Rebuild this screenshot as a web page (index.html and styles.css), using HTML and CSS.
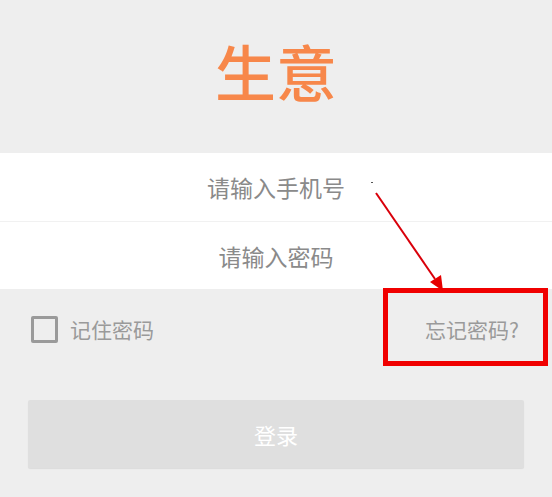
FILE: index.html
```html
<!DOCTYPE html>
<html lang="zh-CN">
  <head>
    <meta charset="UTF-8" />
    <meta name="viewport" content="width=device-width, initial-scale=1.0" />
    <title>生意 登录</title>
    <link rel="stylesheet" href="styles.css">
  </head>
  <body>
    <div class="page">
      <div class="header">
        <h1 class="logo">生意</h1>
      </div>

      <div class="form-panel">
        <div class="form-row">请输入手机号</div>
        <div class="form-row">请输入密码</div>
      </div>

      <div class="options">
        <label class="remember">
          <span class="checkbox"></span>
          <span>记住密码</span>
        </label>
        <a class="forgot">忘记密码?</a>
      </div>

      <div class="login-wrap">
        <button class="login-btn">登录</button>
      </div>

      <!-- 标注 -->
      <div class="mark-box"></div>
      <svg class="mark-arrow" width="552" height="497" viewBox="0 0 552 497">
        <rect x="371" y="182" width="2" height="1" fill="#555" />
        <line x1="376" y1="193" x2="435" y2="279" stroke="#d9000a" stroke-width="2" />
        <polygon points="443,291 430,282 441,275" fill="#e60000" />
      </svg>
    </div>
  </body>
</html>
```

FILE: styles.css
```css
/* 전체 */
body {
  margin: 0;
  background-color: #eeeeee;
  font-family: "Noto Sans CJK SC", "Noto Sans", sans-serif;
}

.page {
  position: relative;
  width: 552px;
  height: 497px;
  overflow: hidden;
}

/* 상단 로고 */
.header {
  height: 153px;
  display: flex;
  align-items: center;
  justify-content: center;
}

.logo {
  margin: 0 0 12px 0;
  font-size: 61px;
  font-weight: 500;
  line-height: 1;
  color: #f7874a;
  letter-spacing: 0;
}

/* 입력 영역 */
.form-panel {
  background-color: #ffffff;
}

.form-row {
  height: 68px;
  display: flex;
  align-items: center;
  justify-content: center;
  font-size: 23px;
  color: #8a8a8a;
}

.form-row + .form-row {
  border-top: 1px solid #f1f1f1;
  height: 67px;
}

/* 옵션 */
.options {
  height: 80px;
  display: flex;
  align-items: center;
  justify-content: space-between;
  padding: 0 33px 0 31px;
  font-size: 21px;
  color: #9a9a9a;
}

.remember {
  display: flex;
  align-items: center;
  gap: 12px;
}

.checkbox {
  width: 21px;
  height: 21px;
  border: 3px solid #9a9a9a;
  border-radius: 2px;
}

.forgot {
  color: #9a9a9a;
}

/* 로그인 버튼 */
.login-wrap {
  padding: 31px 28px 0 28px;
}

.login-btn {
  width: 100%;
  height: 68px;
  border: none;
  border-radius: 2px;
  background-color: #dfdfdf;
  box-shadow: 0 1px 1px rgba(0, 0, 0, 0.08);
  color: #ffffff;
  font-family: inherit;
  font-size: 22px;
}

/* 주석 표시 */
.mark-box {
  position: absolute;
  left: 383px;
  top: 288px;
  width: 155px;
  height: 68px;
  border: 5px solid #f00000;
}

.mark-arrow {
  position: absolute;
  left: 0;
  top: 0;
  pointer-events: none;
}
```
